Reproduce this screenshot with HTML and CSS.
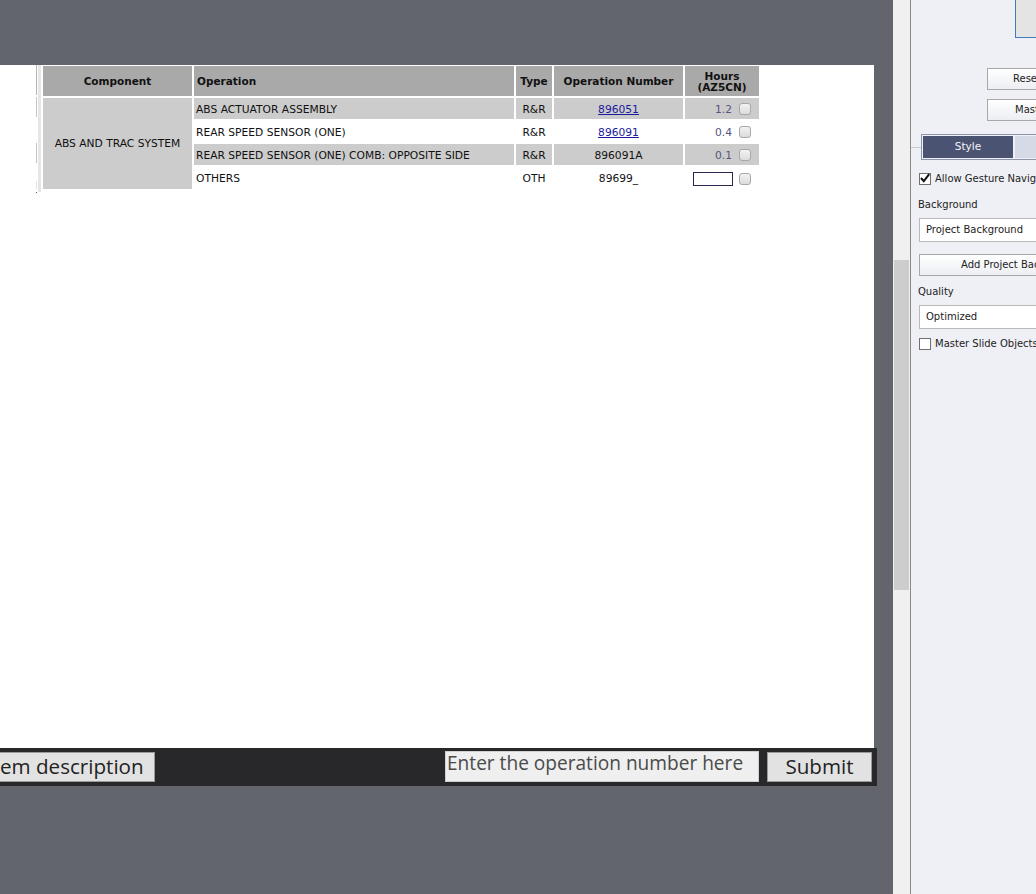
FILE: index.html
```html
<!DOCTYPE html>
<html>
<head>
<meta charset="utf-8">
<link rel="stylesheet" href="styles.css">
</head>
<body>
<div class="app">
  <div class="stage-col">
    <div class="stage">
      <div class="tablewrap">
        <div class="edge1"></div>
        <div class="edge-gap"></div>
        <div class="edge2"></div>
        <table class="ops">
          <colgroup>
            <col class="c-comp"><col class="c-op"><col class="c-type"><col class="c-num"><col class="c-hrs">
          </colgroup>
          <thead>
            <tr class="hdr">
              <th class="center">Component</th>
              <th class="left">Operation</th>
              <th class="center">Type</th>
              <th class="center">Operation Number</th>
              <th class="center hrs-h">Hours<br>(AZ5CN)</th>
            </tr>
          </thead>
          <tbody>
            <tr class="row shade">
              <td class="comp" rowspan="4">ABS AND TRAC SYSTEM</td>
              <td class="op">ABS ACTUATOR ASSEMBLY</td>
              <td class="center">R&amp;R</td>
              <td class="center"><a class="oplink" href="#">896051</a></td>
              <td class="hrs"><span class="hval">1.2</span><span class="cb"></span></td>
            </tr>
            <tr class="row">
              <td class="op">REAR SPEED SENSOR (ONE)</td>
              <td class="center">R&amp;R</td>
              <td class="center"><a class="oplink" href="#">896091</a></td>
              <td class="hrs"><span class="hval">0.4</span><span class="cb"></span></td>
            </tr>
            <tr class="row shade">
              <td class="op">REAR SPEED SENSOR (ONE) COMB: OPPOSITE SIDE</td>
              <td class="center">R&amp;R</td>
              <td class="center">896091A</td>
              <td class="hrs"><span class="hval">0.1</span><span class="cb"></span></td>
            </tr>
            <tr class="row last">
              <td class="op">OTHERS</td>
              <td class="center">OTH</td>
              <td class="center">89699_</td>
              <td class="hrs"><span class="hinput"></span><span class="cb"></span></td>
            </tr>
          </tbody>
        </table>
      </div>
    </div>
    <div class="bar">
      <div class="btn desc">em description</div>
      <div class="opinput">Enter the operation number here</div>
      <div class="btn submit">Submit</div>
    </div>
  </div>
  <div class="scroll"><div class="thumb"></div></div>
  <div class="divider"></div>
  <div class="panel">
    <div class="topbox"></div>
    <div class="pbtn reset">Reset</div>
    <div class="pbtn master">Master</div>
    <div class="tabrow">
      <div class="tabline"></div>
      <div class="tabs">
        <div class="tab active">Style</div>
        <div class="tab rest"></div>
      </div>
    </div>
    <div class="chk-row first">
      <span class="chk checked"><svg width="12" height="12" viewBox="0 0 12 12"><path d="M2 6 L4.8 9.2 L10.2 2.2" fill="none" stroke="#111" stroke-width="2"/></svg></span>
      <span class="chk-label">Allow Gesture Navigation</span>
    </div>
    <div class="plabel bg-label">Background</div>
    <div class="select">Project Background</div>
    <div class="pbtn add">Add Project Background</div>
    <div class="plabel q-label">Quality</div>
    <div class="select">Optimized</div>
    <div class="chk-row second">
      <span class="chk"></span>
      <span class="chk-label">Master Slide Objects On Top</span>
    </div>
  </div>
</div>
</body>
</html>
```

FILE: styles.css
```css
html, body {
  margin: 0;
  padding: 0;
}
body {
  width: 1036px;
  height: 894px;
  overflow: hidden;
  background: #62656c;
  font-family: "DejaVu Sans", Verdana, sans-serif;
}
.app {
  display: flex;
  width: 1036px;
  height: 894px;
}
.stage-col {
  width: 893px;
  flex-shrink: 0;
  padding-top: 65px;
  box-sizing: border-box;
}
.stage {
  width: 874px;
  height: 683px;
  background: #ffffff;
}
.tablewrap {
  display: flex;
  align-items: flex-start;
  margin-left: 36px;
}
.edge1 {
  width: 1px;
  flex-shrink: 0;
  height: 128px;
  background: linear-gradient(to bottom,
    #b4b4b4 0, #b4b4b4 30px, transparent 30px, transparent 32px,
    #c4c4c4 32px, #c4c4c4 52px, transparent 52px, transparent 78px,
    #c4c4c4 78px, #c4c4c4 98px, transparent 98px, transparent 116px,
    #e2e2e2 116px, #e2e2e2 124px, transparent 124px, transparent 127px,
    #555 127px);
}
.edge-gap { width: 1px; flex-shrink: 0; }
.edge2 {
  width: 3px;
  flex-shrink: 0;
  height: 127px;
  background: #e6e6e6;
}
.ops {
  border-collapse: separate;
  border-spacing: 2px;
  margin-left: 0;
  margin-top: -1px;
  table-layout: fixed;
  width: 720px;
  font-size: 10.7px;
  color: #111;
}
.c-comp { width: 149px; }
.c-op { width: 320px; }
.c-type { width: 36px; }
.c-num { width: 129px; }
.c-hrs { width: 74px; }
.ops th, .ops td {
  padding: 0;
  box-sizing: border-box;
  white-space: nowrap;
  overflow: hidden;
}
.hdr th {
  height: 30px;
  background: #a9a9a9;
  font-weight: bold;
  font-size: 10.5px;
  color: #111;
}
.hrs-h {
  line-height: 11px;
  padding-top: 1px !important;
}
.center { text-align: center; }
.left { text-align: left; padding-left: 3px !important; }
.row td { height: 21px; padding-top: 1px; }
.row.last td { height: 22px; }
.shade td { background: #cccccc; }
.comp {
  background: #cccccc;
  text-align: center;
  vertical-align: middle;
  padding-top: 0 !important;
}
.op { padding-left: 2px !important; }
.oplink {
  color: #1b1b9c;
  text-decoration: underline;
}
.hrs {
  text-align: right;
  padding-right: 8px !important;
}
.hrs > span { display: inline-block; vertical-align: middle; }
.hval {
  color: #55557f;
  margin-right: 7px;
}
.cb {
  width: 10px;
  height: 10px;
  border: 1px solid #a8a8a8;
  border-radius: 3px;
  background: linear-gradient(#f2f2f2, #dcdcdc);
}
.hinput {
  width: 38px;
  height: 12px;
  border: 1px solid #2b2550;
  background: #fff;
  margin-right: 6px;
}

.bar {
  width: 877px;
  height: 38px;
  background: #28282a;
  display: flex;
  align-items: flex-start;
  font-family: "Open Sans", "Noto Sans", sans-serif;
}
.btn {
  box-sizing: border-box;
  height: 30px;
  margin-top: 4px;
  background: #e2e2e2;
  border: 1px solid #9a9a9a;
  color: #222;
  font-size: 20.6px;
  line-height: 27px;
  white-space: nowrap;
}
.desc {
  width: 157px;
  margin-left: -2px;
  padding-left: 1px;
  overflow: hidden;
  text-align: left;
}
.opinput {
  box-sizing: border-box;
  width: 314px;
  height: 31px;
  margin-top: 3px;
  margin-left: 290px;
  background: #efefef;
  border: 1px solid #cfcfcf;
  color: #4a4a4a;
  font-size: 19.1px;
  line-height: 22px;
  padding-left: 1px;
  white-space: nowrap;
  overflow: hidden;
}
.submit {
  width: 105px;
  margin-left: 8px;
  text-align: center;
}

.scroll {
  width: 17px;
  flex-shrink: 0;
  background: #f0f0f0;
  height: 894px;
  padding-top: 260px;
  box-sizing: border-box;
}
.thumb {
  width: 15px;
  height: 330px;
  margin-left: 1px;
  background: #cdcdcd;
}
.divider {
  width: 1px;
  flex-shrink: 0;
  background: #8a8a8a;
}
.panel {
  flex: 1;
  background: #eff0f5;
  overflow: hidden;
  font-size: 10px;
  color: #222;
}
.topbox {
  margin-left: 104px;
  width: 100px;
  height: 37px;
  background: #e4e4e4;
  border-left: 1px solid #3f7cb9;
  border-bottom: 1px solid #3f7cb9;
}
.pbtn {
  box-sizing: border-box;
  height: 22px;
  border: 1px solid #a8a8a8;
  background: linear-gradient(#ffffff, #eceef3);
  white-space: nowrap;
  line-height: 20px;
  color: #222;
}
.reset {
  margin-top: 30px;
  margin-left: 76px;
  width: 140px;
  padding-left: 25px;
}
.master {
  margin-top: 9px;
  margin-left: 76px;
  width: 140px;
  padding-left: 27px;
}
.tabrow {
  display: flex;
  margin-top: 13px;
  align-items: flex-start;
}
.tabline {
  width: 10px;
  flex-shrink: 0;
  height: 1px;
  margin-top: 13px;
  background: #c8c8cc;
}
.tabs {
  box-sizing: border-box;
  width: 160px;
  flex-shrink: 0;
  height: 26px;
  border: 1px solid #8d95ad;
  display: flex;
  padding: 1px 0 1px 1px;
}
.tab {
  height: 22px;
  line-height: 20px;
}
.tab.active {
  width: 90px;
  flex-shrink: 0;
  background: #4b5372;
  color: #f4f4f8;
  text-align: center;
  font-size: 10.5px;
}
.tab.rest {
  flex: 1;
  margin-left: 2px;
  background: #d6dae6;
}
.chk-row {
  display: flex;
  align-items: center;
  margin-left: 8px;
  white-space: nowrap;
}
.chk-row.first { margin-top: 12px; }
.chk-row.second { margin-top: 8px; }
.chk {
  box-sizing: border-box;
  flex-shrink: 0;
  width: 12px;
  height: 12px;
  border: 1px solid #707070;
  background: #fff;
  margin-right: 4px;
  position: relative;
}
.chk svg { position: absolute; left: -1px; top: -2px; }
.chk-label { font-size: 10px; line-height: 14px; flex-shrink: 0; }
.plabel {
  margin-left: 7px;
  line-height: 14px;
  white-space: nowrap;
}
.bg-label { margin-top: 12px; }
.q-label { margin-top: 9px; }
.select {
  box-sizing: border-box;
  margin-left: 8px;
  width: 200px;
  height: 24px;
  border: 1px solid #b9b9b9;
  background: #fff;
  line-height: 22px;
  padding-left: 6px;
  white-space: nowrap;
  margin-top: 6px;
}
.add {
  margin-top: 12px;
  margin-left: 8px;
  width: 200px;
  padding-left: 41px;
}
```
